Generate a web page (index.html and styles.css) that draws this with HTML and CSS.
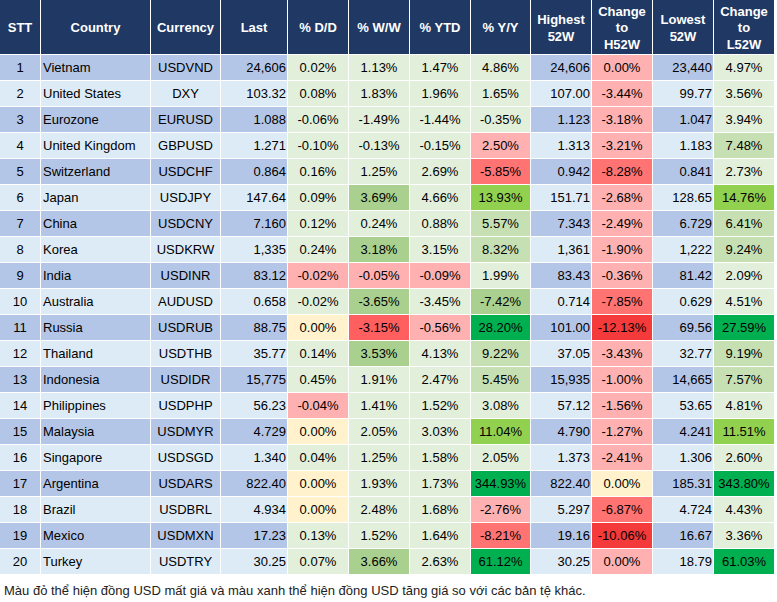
FILE: index.html
```html
<!DOCTYPE html>
<html lang="vi">
<head>
<meta charset="utf-8">
<title>Currency table</title>
<link rel="stylesheet" href="styles.css">
</head>
<body>
<div class="grid">
  <div class="row head">
    <div class="h">STT</div><div class="h">Country</div><div class="h">Currency</div><div class="h">Last</div>
    <div class="h">% D/D</div><div class="h">% W/W</div><div class="h">% YTD</div><div class="h">% Y/Y</div>
    <div class="h">Highest<br>52W</div><div class="h">Change<br>to<br>H52W</div><div class="h">Lowest<br>52W</div><div class="h">Change<br>to<br>L52W</div>
  </div>
  <div class="row odd"><div class="c n">1</div><div class="c t">Vietnam</div><div class="c m">USDVND</div><div class="c r">24,606</div><div class="p">0.02%</div><div class="p">1.13%</div><div class="p">1.47%</div><div class="p">4.86%</div><div class="c r">24,606</div><div class="p r1">0.00%</div><div class="c r">23,440</div><div class="p">4.97%</div></div>
  <div class="row even"><div class="c n">2</div><div class="c t">United States</div><div class="c m">DXY</div><div class="c r">103.32</div><div class="p">0.08%</div><div class="p">1.83%</div><div class="p">1.96%</div><div class="p">1.65%</div><div class="c r">107.00</div><div class="p r1">-3.44%</div><div class="c r">99.77</div><div class="p">3.56%</div></div>
  <div class="row odd"><div class="c n">3</div><div class="c t">Eurozone</div><div class="c m">EURUSD</div><div class="c r">1.088</div><div class="p">-0.06%</div><div class="p">-1.49%</div><div class="p">-1.44%</div><div class="p">-0.35%</div><div class="c r">1.123</div><div class="p r1">-3.18%</div><div class="c r">1.047</div><div class="p">3.94%</div></div>
  <div class="row even"><div class="c n">4</div><div class="c t">United Kingdom</div><div class="c m">GBPUSD</div><div class="c r">1.271</div><div class="p">-0.10%</div><div class="p">-0.13%</div><div class="p">-0.15%</div><div class="p r1">2.50%</div><div class="c r">1.313</div><div class="p r1">-3.21%</div><div class="c r">1.183</div><div class="p g2">7.48%</div></div>
  <div class="row odd"><div class="c n">5</div><div class="c t">Switzerland</div><div class="c m">USDCHF</div><div class="c r">0.864</div><div class="p">0.16%</div><div class="p">1.25%</div><div class="p">2.69%</div><div class="p r2">-5.85%</div><div class="c r">0.942</div><div class="p r2">-8.28%</div><div class="c r">0.841</div><div class="p">2.73%</div></div>
  <div class="row even"><div class="c n">6</div><div class="c t">Japan</div><div class="c m">USDJPY</div><div class="c r">147.64</div><div class="p">0.09%</div><div class="p g1">3.69%</div><div class="p">4.66%</div><div class="p g3">13.93%</div><div class="c r">151.71</div><div class="p r1">-2.68%</div><div class="c r">128.65</div><div class="p g3">14.76%</div></div>
  <div class="row odd"><div class="c n">7</div><div class="c t">China</div><div class="c m">USDCNY</div><div class="c r">7.160</div><div class="p">0.12%</div><div class="p">0.24%</div><div class="p">0.88%</div><div class="p g2">5.57%</div><div class="c r">7.343</div><div class="p r1">-2.49%</div><div class="c r">6.729</div><div class="p g2">6.41%</div></div>
  <div class="row even"><div class="c n">8</div><div class="c t">Korea</div><div class="c m">USDKRW</div><div class="c r">1,335</div><div class="p">0.24%</div><div class="p g1">3.18%</div><div class="p">3.15%</div><div class="p g2">8.32%</div><div class="c r">1,361</div><div class="p r1">-1.90%</div><div class="c r">1,222</div><div class="p g2">9.24%</div></div>
  <div class="row odd"><div class="c n">9</div><div class="c t">India</div><div class="c m">USDINR</div><div class="c r">83.12</div><div class="p r1">-0.02%</div><div class="p r1">-0.05%</div><div class="p r1">-0.09%</div><div class="p">1.99%</div><div class="c r">83.43</div><div class="p r1">-0.36%</div><div class="c r">81.42</div><div class="p">2.09%</div></div>
  <div class="row even"><div class="c n">10</div><div class="c t">Australia</div><div class="c m">AUDUSD</div><div class="c r">0.658</div><div class="p">-0.02%</div><div class="p g1">-3.65%</div><div class="p">-3.45%</div><div class="p g1">-7.42%</div><div class="c r">0.714</div><div class="p r2">-7.85%</div><div class="c r">0.629</div><div class="p">4.51%</div></div>
  <div class="row odd"><div class="c n">11</div><div class="c t">Russia</div><div class="c m">USDRUB</div><div class="c r">88.75</div><div class="p y">0.00%</div><div class="p r3">-3.15%</div><div class="p r1">-0.56%</div><div class="p g4">28.20%</div><div class="c r">101.00</div><div class="p r4">-12.13%</div><div class="c r">69.56</div><div class="p g4">27.59%</div></div>
  <div class="row even"><div class="c n">12</div><div class="c t">Thailand</div><div class="c m">USDTHB</div><div class="c r">35.77</div><div class="p">0.14%</div><div class="p g1">3.53%</div><div class="p">4.13%</div><div class="p g2">9.22%</div><div class="c r">37.05</div><div class="p r1">-3.43%</div><div class="c r">32.77</div><div class="p g2">9.19%</div></div>
  <div class="row odd"><div class="c n">13</div><div class="c t">Indonesia</div><div class="c m">USDIDR</div><div class="c r">15,775</div><div class="p">0.45%</div><div class="p">1.91%</div><div class="p">2.47%</div><div class="p g2">5.45%</div><div class="c r">15,935</div><div class="p r1">-1.00%</div><div class="c r">14,665</div><div class="p g2">7.57%</div></div>
  <div class="row even"><div class="c n">14</div><div class="c t">Philippines</div><div class="c m">USDPHP</div><div class="c r">56.23</div><div class="p r1">-0.04%</div><div class="p">1.41%</div><div class="p">1.52%</div><div class="p">3.08%</div><div class="c r">57.12</div><div class="p r1">-1.56%</div><div class="c r">53.65</div><div class="p">4.81%</div></div>
  <div class="row odd"><div class="c n">15</div><div class="c t">Malaysia</div><div class="c m">USDMYR</div><div class="c r">4.729</div><div class="p y">0.00%</div><div class="p">2.05%</div><div class="p">3.03%</div><div class="p g3">11.04%</div><div class="c r">4.790</div><div class="p r1">-1.27%</div><div class="c r">4.241</div><div class="p g3">11.51%</div></div>
  <div class="row even"><div class="c n">16</div><div class="c t">Singapore</div><div class="c m">USDSGD</div><div class="c r">1.340</div><div class="p">0.04%</div><div class="p">1.25%</div><div class="p">1.58%</div><div class="p">2.05%</div><div class="c r">1.373</div><div class="p r1">-2.41%</div><div class="c r">1.306</div><div class="p">2.60%</div></div>
  <div class="row odd"><div class="c n">17</div><div class="c t">Argentina</div><div class="c m">USDARS</div><div class="c r">822.40</div><div class="p y">0.00%</div><div class="p">1.93%</div><div class="p">1.73%</div><div class="p g4">344.93%</div><div class="c r">822.40</div><div class="p y">0.00%</div><div class="c r">185.31</div><div class="p g4">343.80%</div></div>
  <div class="row even"><div class="c n">18</div><div class="c t">Brazil</div><div class="c m">USDBRL</div><div class="c r">4.934</div><div class="p y">0.00%</div><div class="p">2.48%</div><div class="p">1.68%</div><div class="p r1">-2.76%</div><div class="c r">5.297</div><div class="p r2">-6.87%</div><div class="c r">4.724</div><div class="p">4.43%</div></div>
  <div class="row odd"><div class="c n">19</div><div class="c t">Mexico</div><div class="c m">USDMXN</div><div class="c r">17.23</div><div class="p">0.13%</div><div class="p">1.52%</div><div class="p">1.64%</div><div class="p r2">-8.21%</div><div class="c r">19.16</div><div class="p r4">-10.06%</div><div class="c r">16.67</div><div class="p">3.36%</div></div>
  <div class="row even"><div class="c n">20</div><div class="c t">Turkey</div><div class="c m">USDTRY</div><div class="c r">30.25</div><div class="p">0.07%</div><div class="p g1">3.66%</div><div class="p">2.63%</div><div class="p g4">61.12%</div><div class="c r">30.25</div><div class="p r1">0.00%</div><div class="c r">18.79</div><div class="p g4">61.03%</div></div>
</div>
<p class="note">Màu đỏ thể hiện đồng USD mất giá và màu xanh thể hiện đồng USD tăng giá so với các bản tệ khác.</p>
</body>
</html>
```
FILE: styles.css
```css
html, body {
  margin: 0;
  padding: 0;
  background: #ffffff;
}
body {
  font-family: "Liberation Sans", Arial, sans-serif;
  font-size: 13px;
  color: #000000;
}
.grid {
  display: grid;
  grid-template-columns: 40px 109px 69px 66px 60px 60px 60px 59px 60px 60px 60px 60px;
  grid-template-rows: 54px repeat(20, 25px);
  gap: 1px;
  background: #ffffff;
  width: 774px;
}
.row {
  display: contents;
}
.h {
  background: #1f3864;
  color: #ffffff;
  font-weight: bold;
  line-height: 16.5px;
  padding-top: 3px;
  display: flex;
  align-items: center;
  justify-content: center;
  text-align: center;
}
.c, .p {
  display: flex;
  align-items: center;
  white-space: nowrap;
  overflow: hidden;
}
.odd .c { background: #b4c6e7; }
.even .c { background: #ddebf7; }
.n, .m { justify-content: center; }
.t { padding-left: 2px; }
.r { justify-content: flex-end; padding-right: 1px; }
.p {
  justify-content: center;
  background: #e2efda;
}
.p.g1 { background: #a9d08e; }
.p.g2 { background: #c6e0b4; }
.p.g3 { background: #92d050; }
.p.g4 { background: #00b050; }
.p.r1 { background: #ffb1b1; }
.p.r2 { background: #ff7373; }
.p.r3 { background: #ff5f5f; }
.p.r4 { background: #f43a3a; }
.p.y { background: #fff2cc; }
.note {
  margin: 9px 0 0 4px;
  line-height: 16px;
  color: #222222;
}
```
